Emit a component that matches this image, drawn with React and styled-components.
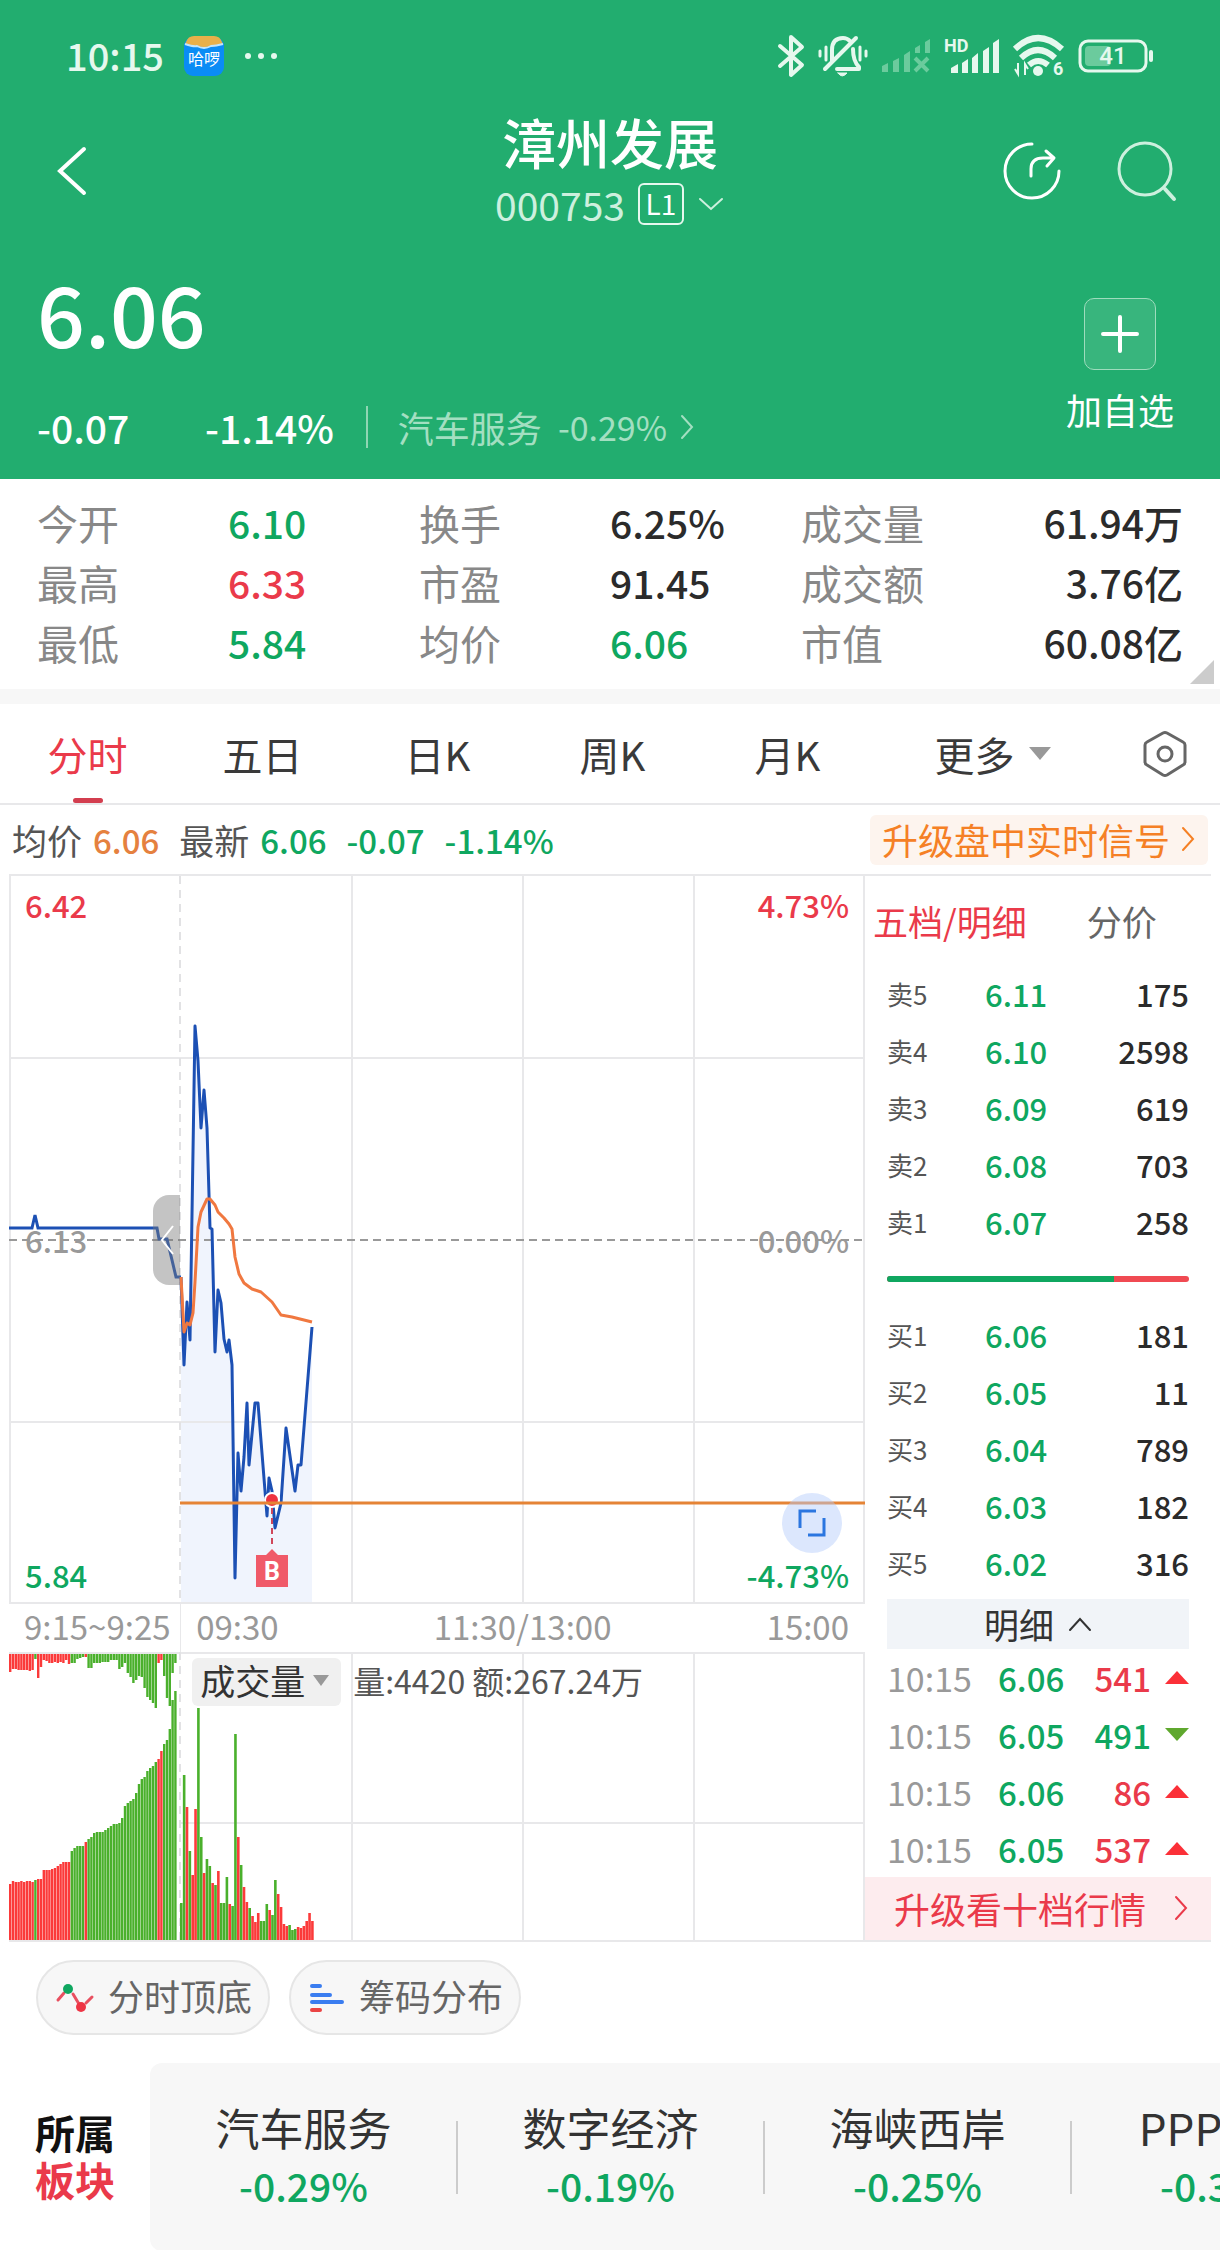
import React, { useState } from "react";
import styled, { createGlobalStyle } from "styled-components";

const GREEN = "#0fa760";
const RED = "#ea3a4a";
const LINE = "#e8e8ea";

const GlobalStyle = createGlobalStyle`
  * {
    box-sizing: border-box;
  }
  body {
    margin: 0;
    background: #fff;
    color: #333;
    font-family: "Noto Sans CJK SC", "Noto Sans", sans-serif;
  }
  button {
    margin: 0;
    padding: 0;
    border: 0;
    background: none;
    color: inherit;
    font: inherit;
    cursor: pointer;
  }
  a {
    color: inherit;
    text-decoration: none;
  }
  svg {
    display: block;
    flex: none;
    overflow: visible;
  }
`;

const Page = styled.div`
  overflow: hidden;
`;

const toneColor = ({ $tone }) =>
  ({ up: RED, down: GREEN, avg: "#e5813f", muted: "#999" })[$tone] || "#2b2b2b";

/* ---------- header ---------- */

const Header = styled.header`
  background: #22ad6f;
  color: #fff;
`;

const StatusBar = styled.div`
  display: flex;
  align-items: center;
  justify-content: space-between;
  height: 112px;
  padding: 0 65px 0 66px;
  color: #e6f8ee;
`;

const StatusSide = styled.div`
  display: flex;
  align-items: center;
  gap: ${({ $gap }) => $gap}px;
`;

const Clock = styled.span`
  padding-bottom: 2px;
  font-size: 38px;
  font-weight: 500;
  line-height: 50px;
`;

const NavBar = styled.nav`
  display: grid;
  grid-template-columns: 1fr auto 1fr;
  align-items: center;
  height: 120px;
  padding: 0 44px;
`;

const BackButton = styled.button`
  justify-self: start;
  padding: 0 12px 4px;
`;

const StockTitle = styled.div`
  text-align: center;
`;

const StockName = styled.h1`
  margin: 0;
  font-size: 54px;
  font-weight: 500;
  line-height: 60px;
`;

const StockCode = styled.button`
  display: flex;
  align-items: center;
  gap: 13px;
  padding-top: 2px;
  font-size: 39px;
  line-height: 60px;
  color: #cdf0de;
`;

const LevelTag = styled.span`
  width: 46px;
  height: 42px;
  border: 2px solid #e6f8ee;
  border-radius: 6px;
  font-size: 28px;
  line-height: 36px;
  color: #fff;
  text-align: center;
`;

const NavActions = styled.div`
  display: flex;
  justify-content: flex-end;
  gap: 54px;
  padding-bottom: 4px;
`;

const Quote = styled.section`
  display: flex;
  justify-content: space-between;
  padding: 44px 46px 28px 37px;
`;

const Price = styled.div`
  font-size: 84px;
  font-weight: 500;
  line-height: 72px;
`;

const ChangeRow = styled.div`
  display: flex;
  align-items: center;
  margin-top: 55px;
  font-size: 39px;
  font-weight: 500;
  line-height: 48px;
`;

const Change = styled.span`
  min-width: 168px;
`;

const Industry = styled.a`
  display: flex;
  align-items: center;
  gap: 16px;
  margin-left: 32px;
  padding-left: 30px;
  border-left: 2px solid #8fd6b3;
  font-size: 36px;
  font-weight: 400;
  line-height: 42px;
  color: #a3dfc1;
`;

const IndustryChange = styled.span`
  display: flex;
  align-items: center;
  gap: 12px;
  font-size: 34px;
`;

const AddButton = styled.button`
  display: flex;
  flex-direction: column;
  align-items: center;
  gap: 15px;
  margin-top: 22px;
  font-size: 36px;
  line-height: 48px;
`;

const PlusBox = styled.span`
  display: grid;
  place-items: center;
  width: 72px;
  height: 72px;
  border: 1px solid #9edcbd;
  border-radius: 10px;
  background: #38b57d;
`;

/* ---------- key figures ---------- */

const Stats = styled.dl`
  position: relative;
  display: grid;
  grid-template-columns: repeat(6, 1fr);
  margin: 0;
  padding: 13px 37px 17px;
  border-bottom: 15px solid #f7f7f7;
  line-height: 60px;
`;

const StatLabel = styled.dt`
  font-size: 41px;
  color: #888;
`;

const StatValue = styled.dd`
  margin: 0;
  font-size: 39px;
  font-weight: 500;
  white-space: nowrap;
  text-align: ${({ $end }) => ($end ? "right" : "left")};
  color: ${toneColor};
`;

const Corner = styled.svg`
  position: absolute;
  right: 6px;
  bottom: 5px;
`;

/* ---------- period tabs ---------- */

const Tabs = styled.div`
  display: grid;
  grid-template-columns: repeat(5, 35fr) 47fr 22fr;
  height: 101px;
  border-bottom: 2px solid ${LINE};
`;

const Tab = styled.button`
  position: relative;
  display: flex;
  align-items: center;
  justify-content: center;
  gap: 14px;
  font-size: 40px;
  color: ${({ $active }) => ($active ? RED : "#3a3a3a")};

  &::after {
    content: "";
    display: ${({ $active }) => ($active ? "block" : "none")};
    position: absolute;
    bottom: 0;
    width: 30px;
    height: 5px;
    border-radius: 3px;
    background: #d33e4f;
  }
`;

/* ---------- chart area ---------- */

const InfoRow = styled.div`
  display: flex;
  align-items: center;
  gap: 20px;
  height: 69px;
  padding: 0 12px;
  line-height: 48px;
`;

const InfoItem = styled.span`
  display: flex;
  align-items: center;
  gap: 11px;
  font-size: 33px;
  font-weight: 500;
  color: ${toneColor};
`;

const InfoLabel = styled.span`
  font-size: 35px;
  font-weight: 400;
  color: #555;
`;

const SignalLink = styled.a`
  display: flex;
  align-items: center;
  gap: 10px;
  margin-left: auto;
  padding: 0 12px 2px;
  border-radius: 6px;
  background: #fdf4ee;
  font-size: 36px;
  color: #f58025;
`;

const Board = styled.div`
  display: grid;
  grid-template-columns: 856fr 346fr;
  margin: 0 9px;
  border-top: 2px solid ${LINE};
  border-bottom: 2px solid ${LINE};
`;

const ChartColumn = styled.div`
  display: flex;
  flex-direction: column;
`;

const Plot = styled.div`
  position: relative;

  & > svg {
    width: 100%;
    height: auto;
  }
`;

const PlotLabels = styled.div`
  position: absolute;
  inset: 6px 16px;
  display: flex;
  flex-direction: column;
  justify-content: space-between;
  pointer-events: none;
`;

const PlotLabelRow = styled.div`
  display: flex;
  justify-content: space-between;
  font-size: 31px;
  font-weight: 500;
  line-height: 46px;
  color: ${toneColor};
`;

const Handle = styled.button`
  position: absolute;
  left: 20%;
  top: 50%;
  display: grid;
  place-items: center;
  width: 27px;
  height: 90px;
  border-radius: 16px 0 0 16px;
  background: rgba(120, 120, 120, 0.44);
  transform: translate(-100%, -50%);
`;

const ExpandButton = styled.button`
  position: absolute;
  right: 23px;
  bottom: 51px;
  display: grid;
  place-items: center;
  width: 60px;
  height: 60px;
  border-radius: 50%;
  background: rgba(178, 202, 250, 0.46);
`;

const Axis = styled.div`
  display: grid;
  grid-template-columns: minmax(0, 1fr) minmax(0, 4fr);
  height: 48px;
  font-size: 33px;
  line-height: 44px;
  color: #999;
`;

const AxisPart = styled.div`
  display: flex;
  justify-content: space-between;
  padding: 0 16px 0 15px;
  white-space: nowrap;

  & + & {
    border-left: 1px solid ${LINE};
  }
`;

const VolumeHead = styled.div`
  position: absolute;
  left: calc(20% + 12px);
  top: 6px;
  display: flex;
  align-items: center;
  gap: 12px;
  font-size: 32px;
  line-height: 44px;
  color: #555;
  white-space: nowrap;
`;

const VolumeButton = styled.button`
  display: flex;
  align-items: center;
  gap: 8px;
  padding: 0 12px 4px 8px;
  border-radius: 6px;
  background: #f0f0f0;
  font-size: 35px;
  line-height: 44px;
  color: #333;
`;

const VolumeInfo = styled.span`
  padding-bottom: 4px;
`;

/* ---------- order book ---------- */

const Depth = styled.aside`
  display: flex;
  flex-direction: column;
`;

const DepthTabs = styled.div`
  display: flex;
  gap: 60px;
  height: 89px;
  padding-left: 8px;
`;

const DepthTab = styled.button`
  font-size: 35px;
  color: ${({ $active }) => ($active ? RED : "#666")};
`;

const DepthTable = styled.table`
  width: calc(100% - 44px);
  margin: 0 22px;
  border-collapse: collapse;
  table-layout: fixed;

  tr {
    height: 57px;
  }
  th,
  td {
    padding: 0;
    line-height: 46px;
    text-align: left;
    vertical-align: middle;
  }
`;

const Side = styled.th`
  width: 98px;
  font-size: 26px;
  font-weight: 400;
  color: #555;
`;

const Cell = styled.td`
  width: ${({ $width }) => ($width ? `${$width}px` : "auto")};
  font-size: ${({ $size }) => $size}px;
  font-weight: ${({ $tone }) => ($tone === "muted" ? 400 : 500)};
  color: ${toneColor};

  && {
    text-align: ${({ $end }) => ($end ? "right" : "left")};
  }
`;

const ArrowCell = styled.td`
  width: 38px;

  svg {
    margin-left: auto;
  }
`;

const Ratio = styled.div`
  display: flex;
  height: 6px;
  margin: 26px 22px 24px;
  border-radius: 3px;
  overflow: hidden;
  background: #f04a52;
`;

const RatioBuy = styled.div`
  background: ${GREEN};
`;

const DetailButton = styled.button`
  display: flex;
  align-items: center;
  justify-content: center;
  gap: 14px;
  height: 50px;
  margin: 8px 22px 0;
  background: #f1f4f8;
  font-size: 35px;
  line-height: 46px;
`;

const UpgradeLink = styled.a`
  display: flex;
  align-items: center;
  justify-content: space-between;
  flex: 1;
  padding: 0 22px 2px 29px;
  background: #fdecee;
  font-size: 36px;
  line-height: 50px;
  color: ${RED};
`;

/* ---------- bottom ---------- */

const Chips = styled.div`
  display: flex;
  gap: 19px;
  padding: 18px 36px 28px;
`;

const Chip = styled.button`
  display: flex;
  align-items: center;
  gap: 14px;
  height: 75px;
  padding: 0 16px 0 18px;
  border: 2px solid #e6e6e6;
  border-radius: 38px;
  background: #f7f7f7;
  font-size: 36px;
  line-height: 50px;
  color: #666;
`;

const ChipText = styled.span`
  padding-bottom: 5px;
`;

const Sectors = styled.section`
  display: flex;
  height: 188px;
`;

const SectorTitle = styled.h2`
  flex: none;
  width: 150px;
  margin: 0;
  padding: 46px 0 0 35px;
  font-size: 40px;
  font-weight: 700;
  line-height: 47px;
  color: #111;

  em {
    display: block;
    font-style: normal;
    color: ${RED};
  }
`;

const SectorList = styled.div`
  display: flex;
  flex: 1;
  min-width: 0;
  overflow: hidden;
  border-radius: 12px 0 0 12px;
  background: #f7f7f7;
`;

const Sector = styled.a`
  position: relative;
  flex: none;
  width: 307px;
  padding-top: 34px;
  font-size: 44px;
  line-height: 60px;
  text-align: center;

  & + &::before {
    content: "";
    position: absolute;
    left: -1px;
    top: 58px;
    width: 2px;
    height: 73px;
    background: #ccc;
  }
`;

const SectorChange = styled.div`
  font-size: 39px;
  font-weight: 500;
  line-height: 56px;
  color: ${GREEN};
`;

/* ---------- data ---------- */

const stats = [
  ["今开", "6.10", "down"],
  ["换手", "6.25%"],
  ["成交量", "61.94万"],
  ["最高", "6.33", "up"],
  ["市盈", "91.45"],
  ["成交额", "3.76亿"],
  ["最低", "5.84", "down"],
  ["均价", "6.06", "down"],
  ["市值", "60.08亿"],
];

const periods = ["分时", "五日", "日K", "周K", "月K"];

const sells = [
  ["卖5", "6.11", 175],
  ["卖4", "6.10", 2598],
  ["卖3", "6.09", 619],
  ["卖2", "6.08", 703],
  ["卖1", "6.07", 258],
];

const buys = [
  ["买1", "6.06", 181],
  ["买2", "6.05", 11],
  ["买3", "6.04", 789],
  ["买4", "6.03", 182],
  ["买5", "6.02", 316],
];

const ticks = [
  ["10:15", "6.06", 541, "up"],
  ["10:15", "6.05", 491, "down"],
  ["10:15", "6.06", 86, "up"],
  ["10:15", "6.05", 537, "up"],
];

const sectors = [
  ["汽车服务", "-0.29%"],
  ["数字经济", "-0.19%"],
  ["海峡西岸", "-0.25%"],
  ["PPP概念", "-0.35%"],
];

const auctionLine =
  "0,352 23,352 26,339 29,352 148,352 150,363 158,363 167,401 172,401";

const priceLine =
  "172,401 175,489 178,426 181,464 186,150 189,185 192,252 195,214 198,252 201,352 203,353 206,476 209,414 212,427 215,463 218,476 220,464 223,489 226,702 229,577 232,615 235,581 238,527 240,589 246,527 249,527 258,640 260,602 263,615 266,652 272,627 277,552 286,615 289,589 292,589 303,451";

const avgLine =
  "172,401 175,456 178,447 181,449 184,437 186,406 189,351 192,336 198,323 201,323 206,329 209,336 215,342 220,348 223,353 226,381 230,398 235,407 243,413 252,416 263,426 272,439 283,441 303,446";

// 集合竞价: 匹配量 (下) / 未匹配量 (上)
const matched = [
  56, 59, 58, 58, 59, 58, 59, 59, 58, 60, 61, 61, 70, 70, 70, 71, 72, 74, 76,
  78, 78, 78, 89, 92, 94, 94, 94, 98, 101, 103, 107, 108, 108, 108, 110, 112,
  114, 116, 116, 117, 122, 134, 137, 139, 141, 147, 156, 161, 163, 169, 172,
  174, 178, 181, 189, 196, 200, 211, 240, 249,
];

const unmatched = [
  18, 15, 15, 16, 16, 16, 16, 17, 16, 5, 24, 13, 6, 7, 9, 9, 8, 9, 8, 9, 6, 10,
  9, 9, 5, 4, 3, 3, 14, 14, 9, 9, 9, 8, 8, 8, 6, 6, 6, 15, 13, 9, 19, 23, 29,
  26, 22, 23, 34, 43, 46, 49, 54, 9, 6, 22, 44, 52, 19, 9,
];

const auctionRed = (i) =>
  (i < 22 && i !== 9) || i === 27 || i === 53 || i === 54;

const volumes = [
  37, 165, 133, 89, 65, 131, 232, 103, 67, 81, 74, 57, 55, 69, 37, 37, 63, 36,
  34, 206, 103, 75, 53, 38, 32, 24, 18, 27, 19, 19, 36, 30, 25, 60, 46, 33, 16,
  14, 15, 10, 11, 13, 12, 14, 19, 27, 19,
];

const volumeTones = "ggrgrrggrggrgrgggrggrgrrgrrrgggrggrrrrgggrrrrrr";

/* ---------- icons ---------- */

const Chevron = ({ d, width, height, stroke = 2 }) => (
  <svg width={width} height={height} fill="none" stroke="currentColor" strokeWidth={stroke} strokeLinecap="round">
    <path d={d} />
  </svg>
);

const AppBadge = () => (
  <svg width="40" height="40" viewBox="0 0 40 40">
    <rect x="0" y="1" width="40" height="39" rx="9" fill="#0a8cf5" />
    <path d="M2 6Q4 0 10 0H30Q36 0 38 6L39 8Q32 11 20 11T1 8Z" fill="#e8b04a" />
    <path d="M1 8Q10 11 13 10Q20 14 27 10Q32 10 39 8" fill="none" stroke="#bfe6ff" strokeWidth="2" />
    <text x="20" y="29" fontSize="16" fill="#fff" textAnchor="middle">
      哈啰
    </text>
  </svg>
);

const Dots = () => (
  <svg width="34" height="8" fill="currentColor">
    <circle cx="4" cy="4" r="3" />
    <circle cx="17" cy="4" r="3" />
    <circle cx="30" cy="4" r="3" />
  </svg>
);

const Bluetooth = () => (
  <svg width="27" height="44" fill="none" stroke="currentColor" strokeWidth="4" strokeLinejoin="round" strokeLinecap="round">
    <path d="M2 12L24 31L13 41V3L24 13L2 32" />
  </svg>
);

const BellOff = () => (
  <svg width="50" height="42" fill="none" stroke="currentColor" strokeWidth="4" strokeLinecap="round">
    <path d="M14 26V15Q14 3 25 3Q29 3 32 6" />
    <path d="M35 14Q35 26 41 32V34H19" strokeLinejoin="round" />
    <path d="M38 3L7 34" />
    <path d="M20 38H29Q24 44 20 38Z" fill="currentColor" strokeWidth="1" />
    <path d="M2 16V21M8 12V25M42 12V25M48 16V21" strokeWidth="3" />
  </svg>
);

const SignalOff = () => (
  <svg width="50" height="34" fill="#6bcb9d" stroke="none">
    <path d="M1 27L7 24V33H1ZM12 22L18 19V33H12ZM23 16L29 12V33H23ZM34 9L39 6V14H34ZM44 3L49 0V14H44Z" />
    <path d="M34 19L47 32M47 19L34 32" stroke="#6bcb9d" strokeWidth="4" />
  </svg>
);

const SignalHD = () => (
  <svg width="56" height="36" fill="currentColor">
    <path d="M7 30L14 26V35H7ZM18 25L24 21V35H18ZM28 20L34 15V35H28ZM39 13L45 9V35H39ZM49 5L55 1V35H49Z" />
    <text x="0" y="14" fontSize="18" fontWeight="700" fontFamily="Roboto, sans-serif">
      HD
    </text>
  </svg>
);

const Wifi = () => (
  <svg width="52" height="42" fill="none" stroke="currentColor" strokeWidth="6">
    <path d="M2 14Q25 -8 49 14M8 23Q25 7 42 23M16 30Q25 22 35 30" />
    <circle cx="25" cy="36" r="5" fill="currentColor" stroke="none" />
    <path d="M2 34L5 39V28M12 40V29L15 34" strokeWidth="2" />
    <text x="40" y="40" fontSize="18" fontWeight="700" fill="currentColor" stroke="none" fontFamily="Roboto, sans-serif">
      6
    </text>
  </svg>
);

const Battery = () => (
  <svg width="77" height="34">
    <rect x="2" y="2" width="66" height="30" rx="8" fill="none" stroke="currentColor" strokeWidth="3" />
    <rect x="7" y="7" width="26" height="20" rx="4" fill="#6bcb9d" />
    <path d="M73 13V21" stroke="currentColor" strokeWidth="4" strokeLinecap="round" />
    <text x="35" y="25" fontSize="24" fontWeight="500" fill="currentColor" textAnchor="middle" fontFamily="Roboto, sans-serif">
      41
    </text>
  </svg>
);

const ShareIcon = () => (
  <svg width="60" height="60" fill="none" stroke="currentColor" strokeWidth="3" strokeLinecap="round">
    <path d="M30 3A27 27 0 1 0 57 30" />
    <path d="M29 35V28Q29 17 41 17H51M44 10L52 17L45 25" strokeLinejoin="round" />
  </svg>
);

const SearchIcon = () => (
  <svg width="60" height="60" fill="none" stroke="#cdf0de" strokeWidth="3" strokeLinecap="round">
    <circle cx="29" cy="28" r="26" />
    <path d="M49 48L58 58" strokeWidth="4" />
  </svg>
);

const HexIcon = () => (
  <svg width="44" height="48" fill="none" stroke="#666" strokeWidth="3" strokeLinejoin="round">
    <path d="M20 3Q22 2 24 3L40 12Q42 13 42 15V32Q42 34 40 35L24 45Q22 46 20 45L4 35Q2 34 2 32V15Q2 13 4 12Z" />
    <circle cx="22" cy="24" r="7" />
  </svg>
);

const PeakIcon = () => (
  <svg width="38" height="30" fill="none" stroke="#e85060" strokeWidth="3" strokeLinecap="round">
    <path d="M2 17L8 10M17 11L23 21M30 20L36 14" />
    <circle cx="12" cy="6" r="5" fill={GREEN} stroke="none" />
    <circle cx="25" cy="24" r="5" fill="#ee3545" stroke="none" />
  </svg>
);

const ChipsIcon = () => (
  <svg width="36" height="30" fill="none" stroke="#3a7df0" strokeWidth="4" strokeLinecap="round">
    <path d="M3 3H11M3 12H21M3 19H33" />
    <path d="M3 27H11" stroke="#ea4444" />
  </svg>
);

const Triangle = ({ up, color, width = 16, height = 11 }) => (
  <svg width={width} height={height} fill={color}>
    <path d={up ? `M0 ${height}L${width / 2} 0L${width} ${height}Z` : `M0 0H${width}L${width / 2} ${height}Z`} />
  </svg>
);

/* ---------- charts ---------- */

const PriceChart = () => (
  <svg viewBox="0 0 856 728" fill="none">
    <polygon points={`172,728 ${priceLine} 303,728`} fill="#f0f4fd" />
    <path d="M343 0V728M514 0V728M685 0V728M1 0V728M855 0V728M0 182H856M0 546H856M0 727H856" stroke={LINE} strokeWidth="2" />
    <path d="M171 0V728" stroke="#e2e2e4" strokeWidth="2" strokeDasharray="8 6" />
    <path d="M0 364H856" stroke="#999" strokeWidth="2" strokeDasharray="8 5" />
    <polyline points={auctionLine} stroke="#1c50b4" strokeWidth="3" />
    <polyline points={priceLine} stroke="#1c50b4" strokeWidth="3" strokeLinejoin="round" />
    <polyline points={avgLine} stroke="#f07840" strokeWidth="3" strokeLinejoin="round" />
    <circle cx="263" cy="624" r="7" fill="#ee3340" stroke="#fff" strokeWidth="2" />
    <path d="M171 627H856" stroke="#e58436" strokeWidth="3" />
    <path d="M263 632V672" stroke="#d0475a" strokeWidth="2" strokeDasharray="6 4" />
    <path d="M247 679H257L263 673L269 679H279V711H247Z" fill="#f05a69" />
    <text x="263" y="704" fontSize="25" fontWeight="700" fill="#fff" textAnchor="middle" fontFamily="Roboto, sans-serif">
      B
    </text>
  </svg>
);

const BAR_RED = "#fb3a3a";
const BAR_GREEN = "#4ab02c";

const VolumeChart = () => (
  <svg viewBox="0 0 856 288">
    <path d="M343 0V288M514 0V288M685 0V288M855 0V288M0 1H856M171 171H856" stroke={LINE} strokeWidth="2" />
    <path d="M171 0V288" stroke="#e2e2e4" strokeWidth="2" strokeDasharray="8 6" />
    {matched.map((h, i) => (
      <g key={i} fill={auctionRed(i) ? BAR_RED : BAR_GREEN}>
        <rect x={i * 2.8} y={288 - h} width="2.4" height={h} />
        <rect x={i * 2.8} y="2" width="2.4" height={unmatched[i]} />
      </g>
    ))}
    {volumes.map((h, i) => (
      <rect
        key={i}
        x={171 + i * 2.85}
        y={288 - h}
        width="2.6"
        height={h}
        fill={volumeTones[i] === "r" ? BAR_RED : BAR_GREEN}
      />
    ))}
  </svg>
);

const DepthRows = ({ rows }) => (
  <DepthTable>
    <tbody>
      {rows.map(([side, price, qty]) => (
        <tr key={side}>
          <Side scope="row">{side}</Side>
          <Cell $size={31} $tone="down">
            {price}
          </Cell>
          <Cell $size={31} $end>
            {qty}
          </Cell>
        </tr>
      ))}
    </tbody>
  </DepthTable>
);

const App = () => {
  const [period, setPeriod] = useState("分时");

  return (
    <Page>
      <GlobalStyle />
      <Header>
        <StatusBar>
          <StatusSide $gap={20}>
            <Clock>10:15</Clock>
            <AppBadge />
            <Dots />
          </StatusSide>
          <StatusSide $gap={13}>
            <Bluetooth />
            <BellOff />
            <SignalOff />
            <SignalHD />
            <Wifi />
            <Battery />
          </StatusSide>
        </StatusBar>

        <NavBar>
          <BackButton type="button" aria-label="返回">
            <Chevron width={32} height={52} d="M28 4L4 26L28 48" stroke={4} />
          </BackButton>
          <StockTitle>
            <StockName>漳州发展</StockName>
            <StockCode type="button">
              000753
              <LevelTag>L1</LevelTag>
              <Chevron width={28} height={16} d="M3 3L14 13L25 3" />
            </StockCode>
          </StockTitle>
          <NavActions>
            <button type="button" aria-label="分享">
              <ShareIcon />
            </button>
            <button type="button" aria-label="搜索">
              <SearchIcon />
            </button>
          </NavActions>
        </NavBar>

        <Quote>
          <div>
            <Price>6.06</Price>
            <ChangeRow>
              <Change>-0.07</Change>
              <span>-1.14%</span>
              <Industry href="#industry">
                汽车服务
                <IndustryChange>
                  -0.29%
                  <Chevron width={16} height={26} d="M3 2L13 13L3 24" />
                </IndustryChange>
              </Industry>
            </ChangeRow>
          </div>
          <AddButton type="button">
            <PlusBox>
              <Chevron width={40} height={40} d="M20 3V37M3 20H37" stroke={4} />
            </PlusBox>
            加自选
          </AddButton>
        </Quote>
      </Header>

      <Stats>
        {stats.map(([label, value, tone], i) => (
          <React.Fragment key={label}>
            <StatLabel>{label}</StatLabel>
            <StatValue $tone={tone} $end={i % 3 === 2}>
              {value}
            </StatValue>
          </React.Fragment>
        ))}
        <Corner width="24" height="24" fill="#ccc">
          <path d="M24 0V24H0Z" />
        </Corner>
      </Stats>

      <Tabs>
        {periods.map((name) => (
          <Tab key={name} type="button" $active={name === period} onClick={() => setPeriod(name)}>
            {name}
          </Tab>
        ))}
        <Tab type="button">
          更多
          <Triangle color="#999" width={22} height={13} />
        </Tab>
        <Tab type="button" aria-label="设置">
          <HexIcon />
        </Tab>
      </Tabs>

      <InfoRow>
        <InfoItem $tone="avg">
          <InfoLabel>均价</InfoLabel>
          6.06
        </InfoItem>
        <InfoItem $tone="down">
          <InfoLabel>最新</InfoLabel>
          6.06
        </InfoItem>
        <InfoItem $tone="down">-0.07</InfoItem>
        <InfoItem $tone="down">-1.14%</InfoItem>
        <SignalLink href="#signal">
          升级盘中实时信号
          <Chevron width={16} height={26} d="M3 2L13 13L3 24" />
        </SignalLink>
      </InfoRow>

      <Board>
        <ChartColumn>
          <Plot>
            <PriceChart />
            <PlotLabels>
              <PlotLabelRow $tone="up">
                <span>6.42</span>
                <span>4.73%</span>
              </PlotLabelRow>
              <PlotLabelRow $tone="muted">
                <span>6.13</span>
                <span>0.00%</span>
              </PlotLabelRow>
              <PlotLabelRow $tone="down">
                <span>5.84</span>
                <span>-4.73%</span>
              </PlotLabelRow>
            </PlotLabels>
            <Handle type="button" aria-label="收起竞价">
              <svg width="16" height="32" fill="none" stroke="#fff" strokeWidth="2">
                <path d="M14 2L3 16L14 30" />
              </svg>
            </Handle>
            <ExpandButton type="button" aria-label="全屏">
              <svg width="28" height="28" fill="none" stroke="#2b76e0" strokeWidth="3">
                <path d="M2 19V2H18M26 9V26H10" />
              </svg>
            </ExpandButton>
          </Plot>
          <Axis>
            <AxisPart>9:15~9:25</AxisPart>
            <AxisPart>
              <span>09:30</span>
              <span>11:30/13:00</span>
              <span>15:00</span>
            </AxisPart>
          </Axis>
          <Plot>
            <VolumeChart />
            <VolumeHead>
              <VolumeButton type="button">
                成交量
                <Triangle color="#999" />
              </VolumeButton>
              <VolumeInfo>量:4420 额:267.24万</VolumeInfo>
            </VolumeHead>
          </Plot>
        </ChartColumn>

        <Depth>
          <DepthTabs>
            <DepthTab type="button" $active>
              五档/明细
            </DepthTab>
            <DepthTab type="button">分价</DepthTab>
          </DepthTabs>
          <DepthRows rows={sells} />
          <Ratio>
            <RatioBuy style={{ width: "75%" }} />
          </Ratio>
          <DepthRows rows={buys} />
          <DetailButton type="button">
            明细
            <Chevron width={24} height={16} d="M2 14L12 3L22 14" />
          </DetailButton>
          <DepthTable>
            <tbody>
              {ticks.map(([time, price, qty, tone], i) => (
                <tr key={i}>
                  <Cell $size={34} $width={111} $tone="muted">
                    {time}
                  </Cell>
                  <Cell $size={33} $width={80} $tone="down">
                    {price}
                  </Cell>
                  <Cell $size={33} $tone={tone} $end>
                    {qty}
                  </Cell>
                  <ArrowCell>
                    <Triangle up={tone === "up"} color={tone === "up" ? "#fb3038" : "#5fa82e"} width={24} height={13} />
                  </ArrowCell>
                </tr>
              ))}
            </tbody>
          </DepthTable>
          <UpgradeLink href="#level2">
            升级看十档行情
            <Chevron width={16} height={26} d="M3 2L13 13L3 24" />
          </UpgradeLink>
        </Depth>
      </Board>

      <Chips>
        <Chip type="button">
          <PeakIcon />
          <ChipText>分时顶底</ChipText>
        </Chip>
        <Chip type="button">
          <ChipsIcon />
          <ChipText>筹码分布</ChipText>
        </Chip>
      </Chips>

      <Sectors>
        <SectorTitle>
          所属<em>板块</em>
        </SectorTitle>
        <SectorList>
          {sectors.map(([name, change]) => (
            <Sector key={name} href="#sector">
              {name}
              <SectorChange>{change}</SectorChange>
            </Sector>
          ))}
        </SectorList>
      </Sectors>
    </Page>
  );
};

export default App;
